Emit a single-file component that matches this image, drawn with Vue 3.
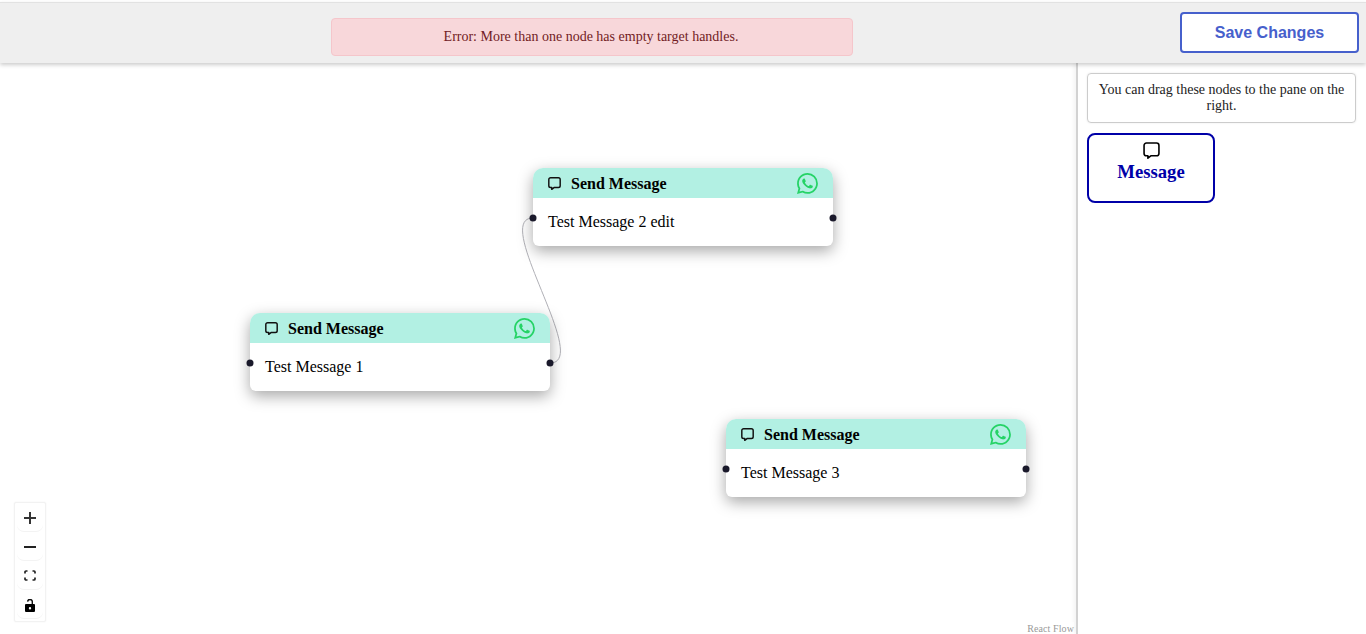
<script setup>
const nodes = [
  { id: 1, text: 'Test Message 1', cls: 'n1' },
  { id: 2, text: 'Test Message 2 edit', cls: 'n2' },
  { id: 3, text: 'Test Message 3', cls: 'n3' }
]
const chat = 'M3.2 1h9.6A2.2 2.2 0 0 1 15 3.2v7.6a2.2 2.2 0 0 1-2.2 2.2H7.4L4.6 15.2V13H3.2A2.2 2.2 0 0 1 1 10.8V3.2A2.2 2.2 0 0 1 3.2 1z'
const wa = 'M13.601 2.326A7.854 7.854 0 0 0 7.994 0C3.627 0 .068 3.558.064 7.926c0 1.399.366 2.76 1.057 3.965L0 16l4.204-1.102a7.933 7.933 0 0 0 3.79.965h.004c4.368 0 7.926-3.558 7.93-7.93A7.898 7.898 0 0 0 13.6 2.326zM7.994 14.521a6.573 6.573 0 0 1-3.356-.92l-.24-.144-2.494.654.666-2.433-.156-.251a6.56 6.56 0 0 1-1.007-3.505c0-3.626 2.957-6.584 6.591-6.584a6.56 6.56 0 0 1 4.66 1.931 6.557 6.557 0 0 1 1.928 4.66c-.004 3.639-2.961 6.592-6.592 6.592zm3.615-4.934c-.197-.099-1.17-.578-1.353-.646-.182-.065-.315-.099-.445.099-.133.197-.513.646-.627.775-.114.133-.232.148-.43.05-.197-.1-.836-.308-1.592-.985-.59-.525-.985-1.175-1.103-1.372-.114-.198-.011-.304.088-.403.087-.088.197-.232.296-.346.1-.114.133-.198.198-.33.065-.134.034-.248-.015-.347-.05-.099-.445-1.076-.612-1.47-.16-.389-.323-.335-.445-.34-.114-.007-.247-.007-.38-.007a.729.729 0 0 0-.529.247c-.182.198-.691.677-.691 1.654 0 .977.71 1.916.81 2.049.098.133 1.394 2.132 3.383 2.992.47.205.84.326 1.129.418.475.152.904.129 1.246.08.38-.058 1.171-.48 1.338-.943.164-.464.164-.86.114-.943-.049-.084-.182-.133-.38-.232z'
</script>

<template>
  <div class="page">
    <header class="topbar">
      <div class="error">Error: More than one node has empty target handles.</div>
      <button class="save">Save Changes</button>
    </header>
    <div class="main">
      <div class="canvas">
        <svg class="edges" width="1076" height="571">
          <path d="M550 300C592 300 491 155 533 155" fill="none" stroke="#b1b1b7" stroke-width="1" />
        </svg>
        <div v-for="n in nodes" :key="n.id" class="node" :class="n.cls">
          <div class="node-head">
            <svg class="chat" viewBox="0 0 16 16" width="13" height="13"><path :d="chat" fill="none" stroke="#111" stroke-width="1.8" stroke-linejoin="round" /></svg>
            <span class="node-title">Send Message</span>
            <svg class="wa" viewBox="0 0 16 16" width="21" height="21"><path :d="wa" fill="#25d366" /></svg>
          </div>
          <div class="node-body">{{ n.text }}</div>
          <span class="handle left"></span>
          <span class="handle right"></span>
        </div>
        <div class="controls">
          <div class="ctrl nudge">
            <svg viewBox="0 0 12 12" width="12" height="12"><path d="M6 0v12M0 6h12" fill="none" stroke="#333" stroke-width="2" /></svg>
          </div>
          <div class="ctrl nudge">
            <svg viewBox="0 0 12 2" width="12" height="2"><path d="M0 0h12v2H0z" fill="#222" /></svg>
          </div>
          <div class="ctrl">
            <svg viewBox="0 0 12 11" width="12" height="11"><path d="M1 3.5V2a1 1 0 0 1 1-1h1.5M8.5 1H10a1 1 0 0 1 1 1v1.5M11 7.5V9a1 1 0 0 1-1 1H8.500M3.500 10H2a1 1 0 0 1-1-1V7.500" fill="none" stroke="#222" stroke-width="1.7" /></svg>
          </div>
          <div class="ctrl nudge">
            <svg viewBox="0 0 10 13" width="10" height="13"><path d="M2.600 2.600A2.300 2.300 0 0 1 7.300 3V6" fill="none" stroke="#111" stroke-width="1.400" /><path fill-rule="evenodd" d="M1 5h8a1 1 0 0 1 1 1v6a1 1 0 0 1-1 1H1a1 1 0 0 1-1-1V6a1 1 0 0 1 1-1zm4 3a1.200 1.200 0 1 0 0 2.400A1.200 1.200 0 0 0 5 8z" fill="#000" /></svg>
          </div>
        </div>
        <div class="attribution">React Flow</div>
      </div>
      <aside class="sidebar">
        <div class="info">You can drag these nodes to the pane on the right.</div>
        <div class="drag">
          <svg viewBox="0 0 16 16" width="17" height="17"><path :d="chat" fill="none" stroke="#000" stroke-width="1.500" stroke-linejoin="round" /></svg>
          <span class="drag-label">Message</span>
        </div>
      </aside>
    </div>
  </div>
</template>

<style>
html, body { margin: 0; background: #fff; }
</style>

<style scoped>
.page {
  width: 1366px;
  height: 634px;
  overflow: hidden;
  padding-top: 2px;
  box-sizing: border-box;
  display: flex;
  flex-direction: column;
  font-family: "Liberation Serif", "Times New Roman", serif;
  font-size: 16px;
  color: #000;
}
.topbar {
  position: relative;
  z-index: 5;
  flex: none;
  height: 61px;
  box-sizing: border-box;
  border-top: 1px solid #e2e2e2;
  background: #efefef;
  box-shadow: 0 2px 4px rgba(0, 0, 0, 0.2);
  display: flex;
  align-items: flex-start;
  padding: 9px 7px 0 331px;
}
.error {
  width: 522px;
  height: 38px;
  margin-top: 6px;
  padding-right: 2px;
  box-sizing: border-box;
  border: 1px solid #f5c6cb;
  border-radius: 4px;
  background: #f8d7da;
  color: #721c24;
  font-size: 14px;
  display: flex;
  align-items: center;
  justify-content: center;
}
.save {
  margin-left: auto;
  width: 179px;
  height: 41px;
  box-sizing: border-box;
  border: 2px solid #4660cc;
  border-radius: 4px;
  background: #fff;
  color: #4660cc;
  font-family: "Liberation Sans", Arial, sans-serif;
  font-size: 16px;
  font-weight: 700;
}
.main {
  flex: 1;
  display: flex;
  min-height: 0;
}
.canvas {
  position: relative;
  width: 1076px;
  flex: none;
  overflow: hidden;
}
.edges {
  position: absolute;
  left: 0;
  top: 0;
}
.node {
  position: absolute;
  width: 300px;
  height: 78px;
  border-radius: 10px 10px 6px 6px;
  background: #fff;
  box-shadow: 0 5px 15px rgba(0, 0, 0, 0.35);
}
.n1 { left: 250px; top: 250px; }
.n2 { left: 533px; top: 105px; }
.n3 { left: 726px; top: 356px; }
.node-head {
  height: 30px;
  border-radius: 10px 10px 0 0;
  background: #b2f0e3;
  display: flex;
  align-items: center;
  padding: 0 15px;
}
.chat { flex: none; }
.node-title {
  margin-left: 10px;
  margin-top: 1px;
  font-weight: 700;
}
.wa { margin-left: auto; }
.node-body {
  padding: 15px;
  line-height: 18px;
}
.handle {
  position: absolute;
  top: 50px;
  width: 7px;
  height: 7px;
  border-radius: 50%;
  background: #1a192b;
  transform: translate(-50%, -50%);
}
.handle.left { left: 0; }
.handle.right { left: 100%; }
.controls {
  position: absolute;
  left: 14px;
  top: 439px;
  width: 32px;
  box-sizing: border-box;
  border: 1px solid #f2f2f2;
  border-radius: 2px;
  padding: 0 2px 2px;
  background: #fff;
  box-shadow: 0 0 2px rgba(0, 0, 0, 0.06);
}
.ctrl {
  height: 29px;
  box-sizing: border-box;
  border-bottom: 1px solid #f3f3f3;
  border-radius: 0 0 7px 7px;
  display: flex;
  align-items: center;
  justify-content: center;
}
.nudge svg { margin-top: 2px; }
.attribution {
  position: absolute;
  right: 2px;
  bottom: -2px;
  font-size: 10px;
  letter-spacing: 0.1px;
  line-height: 14px;
  color: #999;
  background: rgba(255, 255, 255, 0.5);
}
.sidebar {
  flex: 1;
  border-left: 2px solid #d2d2d2;
  box-shadow: -2px 0 4px rgba(0, 0, 0, 0.05);
  box-sizing: border-box;
  padding: 10px 10px 0 9px;
}
.info {
  box-sizing: border-box;
  height: 50px;
  padding: 8px 10px;
  border: 1px solid #ccc;
  border-radius: 4px;
  box-shadow: 0 0 2px rgba(0, 0, 0, 0.1);
  font-size: 14px;
  line-height: 16px;
  text-align: center;
  color: #222;
}
.drag {
  margin-top: 10px;
  box-sizing: border-box;
  width: 128px;
  height: 70px;
  border: 2px solid #0000a8;
  border-radius: 8px;
  display: flex;
  flex-direction: column;
  align-items: center;
  padding-top: 7px;
  font-weight: 700;
  color: #0000a8;
}
.drag-label {
  margin-top: 2px;
  font-size: 18.72px;
}
</style>
